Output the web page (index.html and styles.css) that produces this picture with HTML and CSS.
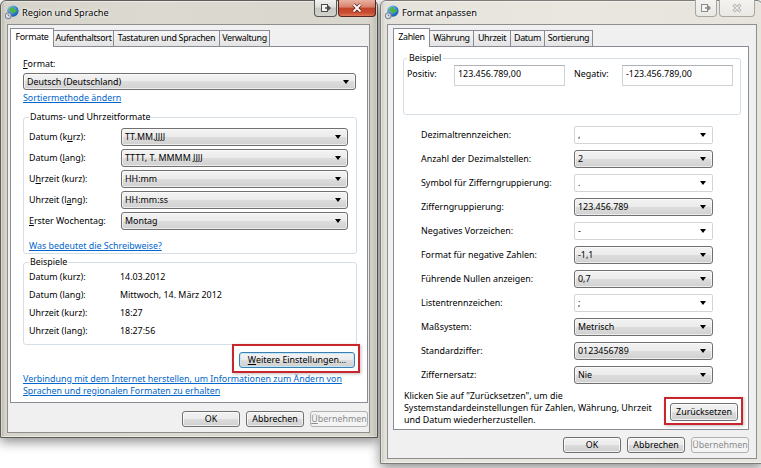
FILE: index.html
```html
<!DOCTYPE html>
<html lang="de">

<head>
    <meta charset="UTF-8">
    <meta name="viewport" content="width=device-width, initial-scale=1.0">
    <title>Region und Sprache</title>
    <link rel="stylesheet" href="styles.css">
</head>

<body>
    <div class="desk">

        <!-- Region und Sprache -->
        <section class="win win-main">
            <header class="titlebar">
                <svg class="appicon" viewBox="0 0 16 16">
                    <defs>
                        <radialGradient id="sea1" cx="0.35" cy="0.3" r="0.8">
                            <stop offset="0" stop-color="#9fd3ff"/>
                            <stop offset="0.6" stop-color="#2f7fd6"/>
                            <stop offset="1" stop-color="#134f9c"/>
                        </radialGradient>
                    </defs>
                    <circle cx="9.5" cy="6.5" r="6" fill="url(#sea1)"/>
                    <path d="M6 3.5c1.5-1.3 3.5-1.6 4.6-.8.6.5-.4 1.3.4 1.9.9.6 2.2.1 2.6 1.2.3.9-.7 1.6-1.6 1.7-1 .1-1.2 1.2-2 1.5-.9.3-1.2-.9-1.9-1.4C7.3 7 5.6 7 5.6 5.8c0-.9.1-1.6.4-2.3z" fill="#4fb443"/>
                    <circle cx="4.5" cy="11.5" r="3.6" fill="#7d8794"/>
                    <circle cx="4.5" cy="11.5" r="2.4" fill="#e9edf2"/>
                    <path d="M4.5 10v1.6h1.3" stroke="#445" stroke-width="0.8" fill="none"/>
                </svg>
                <span class="title">Region und Sprache</span>
                <div class="caption caption-main">
                    <span class="cbtn cbtn-tool">
                        <svg viewBox="0 0 12 10" width="12" height="10">
                            <rect x="1.5" y="1.5" width="6" height="7" fill="#f4f4f2" stroke="#4b4d50"/>
                            <path d="M5 5h4.5M8 3l2 2-2 2" stroke="#4b4d50" stroke-width="1.4" fill="none"/>
                        </svg>
                    </span>
                    <span class="cbtn cbtn-close">
                        <svg viewBox="0 0 12 10" width="12" height="10">
                            <path d="M2.5 1.5l7 7M9.5 1.5l-7 7" stroke="#5a1d12" stroke-width="3.2"/>
                            <path d="M2.5 1.5l7 7M9.5 1.5l-7 7" stroke="#fff" stroke-width="1.8"/>
                        </svg>
                    </span>
                </div>
            </header>
            <div class="frame-body">
                <div class="client">
                    <div class="tabs">
                        <span class="tab active tw-formate">Formate</span>
                        <span class="tab tw-ort">Aufenthaltsort</span>
                        <span class="tab tw-tast">Tastaturen und Sprachen</span>
                        <span class="tab tw-verw">Verwaltung</span>
                    </div>
                    <div class="pane pane-main">
                        <div class="lbl lbl-format"><u>F</u>ormat:</div>
                        <div class="combo combo-lang"><span class="val">Deutsch (Deutschland)</span></div>
                        <a class="link link-sort" href="#">Sortiermethode ändern</a>

                        <fieldset class="group group-formats">
                            <legend>Datums- und Uhrzeitformate</legend>
                            <div class="form-rows">
                                <div class="frow">
                                    <span class="flabel">Datum (k<u>u</u>rz):</span>
                                    <div class="combo combo-fmt"><span class="val">TT.MM.JJJJ</span></div>
                                </div>
                                <div class="frow">
                                    <span class="flabel">Datum (<u>l</u>ang):</span>
                                    <div class="combo combo-fmt"><span class="val">TTTT, T. MMMM JJJJ</span></div>
                                </div>
                                <div class="frow">
                                    <span class="flabel">U<u>h</u>rzeit (kurz):</span>
                                    <div class="combo combo-fmt"><span class="val">HH:mm</span></div>
                                </div>
                                <div class="frow">
                                    <span class="flabel">Uhrzeit (l<u>a</u>ng):</span>
                                    <div class="combo combo-fmt"><span class="val">HH:mm:ss</span></div>
                                </div>
                                <div class="frow">
                                    <span class="flabel"><u>E</u>rster Wochentag:</span>
                                    <div class="combo combo-fmt"><span class="val">Montag</span></div>
                                </div>
                            </div>
                            <a class="link link-notation" href="#">Was bedeutet die Schreibweise?</a>
                        </fieldset>

                        <fieldset class="group group-examples">
                            <legend>Beispiele</legend>
                            <div class="ex-rows">
                                <div class="erow"><span class="elabel">Datum (kurz):</span><span>14.03.2012</span></div>
                                <div class="erow"><span class="elabel">Datum (lang):</span><span>Mittwoch, 14. März 2012</span></div>
                                <div class="erow"><span class="elabel">Uhrzeit (kurz):</span><span>18:27</span></div>
                                <div class="erow"><span class="elabel">Uhrzeit (lang):</span><span>18:27:56</span></div>
                            </div>
                        </fieldset>

                        <div class="mark mark-more">
                            <span class="btn btn-default btn-more"><u>W</u>eitere Einstellungen...</span>
                        </div>
                        <a class="link link-online" href="#">Verbindung mit dem Internet herstellen, um Informationen zum Ändern von<br>Sprachen und regionalen Formaten zu erhalten</a>
                    </div>
                    <div class="dlg-buttons buttons-main">
                        <span class="btn">OK</span>
                        <span class="btn">Abbrechen</span>
                        <span class="btn disabled"><u>Ü</u>bernehmen</span>
                    </div>
                </div>
            </div>
        </section>

        <!-- Format anpassen -->
        <section class="win win-custom inactive">
            <header class="titlebar">
                <svg class="appicon" viewBox="0 0 16 16">
                    <defs>
                        <radialGradient id="sea2" cx="0.35" cy="0.3" r="0.8">
                            <stop offset="0" stop-color="#9fd3ff"/>
                            <stop offset="0.6" stop-color="#2f7fd6"/>
                            <stop offset="1" stop-color="#134f9c"/>
                        </radialGradient>
                    </defs>
                    <circle cx="9.5" cy="6.5" r="6" fill="url(#sea2)"/>
                    <path d="M6 3.5c1.5-1.3 3.5-1.6 4.6-.8.6.5-.4 1.3.4 1.9.9.6 2.2.1 2.6 1.2.3.9-.7 1.6-1.6 1.7-1 .1-1.2 1.2-2 1.5-.9.3-1.2-.9-1.9-1.4C7.3 7 5.6 7 5.6 5.8c0-.9.1-1.6.4-2.3z" fill="#4fb443"/>
                    <circle cx="4.5" cy="11.5" r="3.6" fill="#7d8794"/>
                    <circle cx="4.5" cy="11.5" r="2.4" fill="#e9edf2"/>
                    <path d="M4.5 10v1.6h1.3" stroke="#445" stroke-width="0.8" fill="none"/>
                </svg>
                <span class="title">Format anpassen</span>
                <div class="caption caption-custom">
                    <span class="cbtn cbtn-tool">
                        <svg viewBox="0 0 12 10" width="12" height="10">
                            <rect x="1.5" y="1.5" width="6" height="7" fill="#f4f4f2" stroke="#8a8c8e"/>
                            <path d="M5 5h4.5M8 3l2 2-2 2" stroke="#8a8c8e" stroke-width="1.4" fill="none"/>
                        </svg>
                    </span>
                    <span class="cbtn cbtn-close">
                        <svg viewBox="0 0 12 10" width="12" height="10">
                            <path d="M2.5 1.5l7 7M9.5 1.5l-7 7" stroke="#9a9c9e" stroke-width="3"/>
                            <path d="M2.5 1.5l7 7M9.5 1.5l-7 7" stroke="#f2f2f2" stroke-width="1.4"/>
                        </svg>
                    </span>
                </div>
            </header>
            <div class="frame-body">
                <div class="client">
                    <div class="tabs tabs-custom">
                        <span class="tab active tw-zahlen">Zahlen</span>
                        <span class="tab tw-waehr">Währung</span>
                        <span class="tab tw-uhr">Uhrzeit</span>
                        <span class="tab tw-datum">Datum</span>
                        <span class="tab tw-sort">Sortierung</span>
                    </div>
                    <div class="pane pane-custom">
                        <fieldset class="group group-sample">
                            <legend>Beispiel</legend>
                            <div class="sample-row">
                                <span class="slabel">Positiv:</span>
                                <span class="tb">123.456.789,00</span>
                                <span class="slabel slabel-neg">Negativ:</span>
                                <span class="tb">-123.456.789,00</span>
                            </div>
                        </fieldset>

                        <div class="num-rows">
                            <div class="nrow"><span class="nlabel">Dezimaltrennzeichen:</span><div class="combo combo-num edit"><span class="val">,</span></div></div>
                            <div class="nrow"><span class="nlabel">Anzahl der Dezimalstellen:</span><div class="combo combo-num"><span class="val">2</span></div></div>
                            <div class="nrow"><span class="nlabel">Symbol für Zifferngruppierung:</span><div class="combo combo-num edit"><span class="val">.</span></div></div>
                            <div class="nrow"><span class="nlabel">Zifferngruppierung:</span><div class="combo combo-num"><span class="val">123.456.789</span></div></div>
                            <div class="nrow"><span class="nlabel">Negatives Vorzeichen:</span><div class="combo combo-num edit"><span class="val">-</span></div></div>
                            <div class="nrow"><span class="nlabel">Format für negative Zahlen:</span><div class="combo combo-num"><span class="val">-1,1</span></div></div>
                            <div class="nrow"><span class="nlabel">Führende Nullen anzeigen:</span><div class="combo combo-num"><span class="val">0,7</span></div></div>
                            <div class="nrow"><span class="nlabel">Listentrennzeichen:</span><div class="combo combo-num edit"><span class="val">;</span></div></div>
                            <div class="nrow"><span class="nlabel">Maßsystem:</span><div class="combo combo-num"><span class="val">Metrisch</span></div></div>
                            <div class="nrow"><span class="nlabel">Standardziffer:</span><div class="combo combo-num"><span class="val">0123456789</span></div></div>
                            <div class="nrow"><span class="nlabel">Ziffernersatz:</span><div class="combo combo-num"><span class="val">Nie</span></div></div>
                        </div>

                        <div class="reset-row">
                            <p class="reset-text">Klicken Sie auf "Zurücksetzen", um die<br>Systemstandardeinstellungen für Zahlen, Währung, Uhrzeit<br>und Datum wiederherzustellen.</p>
                            <div class="mark mark-reset">
                                <span class="btn btn-reset">Zurücksetzen</span>
                            </div>
                        </div>
                    </div>
                    <div class="dlg-buttons buttons-custom">
                        <span class="btn">OK</span>
                        <span class="btn">Abbrechen</span>
                        <span class="btn disabled">Übernehmen</span>
                    </div>
                </div>
            </div>
        </section>

    </div>
</body>

</html>
```

FILE: styles.css
```css
* {
    box-sizing: border-box;
}

body {
    margin: 0;
    width: 761px;
    height: 468px;
    overflow: hidden;
    background: #fff;
    font-family: "Noto Sans", "DejaVu Sans", sans-serif;
    font-size: 8.9px;
    line-height: 12px;
    color: #000;
}

.desk {
    position: relative;
    width: 761px;
    height: 468px;
    overflow: hidden;
}

/* window frames */
.win {
    position: absolute;
    top: 0;
    display: flex;
    flex-direction: column;
    border: 1px solid #5d5e5a;
    border-radius: 6px 6px 0 0;
    background: linear-gradient(90deg, #b4b2aa 0, #d6d4ca 4px, #dcdad0 40%, #d9d7cd 100%);
    box-shadow: inset 0 0 0 1px rgba(255, 255, 255, .45), 0 4px 12px rgba(0, 0, 0, .45);
}

.win-main {
    left: 0;
    width: 378px;
    height: 438px;
}

.win-custom {
    left: 380px;
    width: 383px;
    height: 464px;
    border-color: #7c7d79;
    background: linear-gradient(90deg, #c9c7bf 0, #e4e2da 4px, #e9e7df 50%, #e6e4dc 100%);
}

.titlebar {
    flex: none;
    height: 23px;
    display: flex;
    align-items: center;
    padding-left: 3px;
}

.appicon {
    width: 15px;
    height: 15px;
    margin-right: 3px;
}

.title {
    font-size: 9.2px;
    text-shadow: 0 0 4px #fff, 0 0 2px #fff;
}

.caption {
    margin-left: auto;
    align-self: flex-start;
    display: flex;
    margin-top: -1px;
}

.caption-main {
    gap: 1px;
    margin-right: 1px;
}

.caption-custom {
    gap: 2px;
    margin-right: 7px;
}

.cbtn {
    height: 17px;
    display: flex;
    align-items: center;
    justify-content: center;
    border: 1px solid #55575a;
    border-top: none;
    border-radius: 0 0 4px 4px;
}

.caption-main .cbtn-tool {
    width: 23px;
    background: linear-gradient(#f1f1ef, #dededa 45%, #c8c8c3 50%, #d4d4cf);
}

.caption-main .cbtn-close {
    width: 38px;
    border-color: #5a261c;
    background: linear-gradient(#e9b1a3, #d8806b 45%, #c2442b 50%, #c94d31 80%, #de7a5b);
}

.caption-custom .cbtn {
    border-color: #a6a7a5;
    background: linear-gradient(#f4f3ef, #e9e8e3);
}

.caption-custom .cbtn-tool {
    width: 22px;
}

.caption-custom .cbtn-close {
    width: 36px;
}

.frame-body {
    flex: 1;
    display: flex;
    padding: 0 7px 4px 6px;
}

.win-custom .frame-body {
    padding: 0 5px 4px 6px;
}

.client {
    flex: 1;
    display: flex;
    flex-direction: column;
    border: 1px solid #8e8f8c;
    background: #f0f0f0;
}

/* tabs */
.tabs {
    position: relative;
    z-index: 1;
    display: flex;
    align-items: flex-end;
    height: 18px;
    margin: 3px 0 0 2px;
}

.tabs-custom {
    margin-left: 5px;
}

.tab {
    height: 16px;
    margin-right: -1px;
    border: 1px solid #898c95;
    border-bottom: none;
    background: linear-gradient(#f7f7f7, #e3e3e3);
    text-align: center;
    line-height: 14px;
    letter-spacing: -0.3px;
    white-space: nowrap;
}

.tab.active {
    position: relative;
    z-index: 2;
    height: 19px;
    margin-bottom: -1px;
    background: #fff;
    line-height: 15px;
}

.tw-formate { width: 44px; }
.tw-ort { width: 61px; }
.tw-tast { width: 107px; }
.tw-verw { width: 51px; }

.tw-zahlen { width: 37px; }
.tw-waehr { width: 45px; }
.tw-uhr { width: 38px; }
.tw-datum { width: 35px; }
.tw-sort { width: 49px; }

.pane {
    display: flex;
    flex-direction: column;
    border: 1px solid #898c95;
    background: #fff;
}

.pane-main {
    width: 358px;
    height: 357px;
    margin-left: 2px;
    padding-left: 12px;
}

.pane-custom {
    width: 356px;
    height: 384px;
    margin-left: 5px;
}

/* controls */
u {
    text-decoration-thickness: 1px;
    text-underline-offset: 1px;
}

.link {
    align-self: flex-start;
    color: #0066cc;
    text-decoration: underline;
    white-space: nowrap;
}

.combo {
    display: flex;
    align-items: center;
    height: 18px;
    padding-left: 3px;
    border: 1px solid #707070;
    border-radius: 3px;
    background: linear-gradient(#f3f3f3, #ebebeb 50%, #dddddd 50%, #d0d0d0);
    box-shadow: inset 0 0 0 1px rgba(255, 255, 255, .6);
    white-space: nowrap;
}

.combo .val {
    flex: 1;
}

.combo::after {
    content: "";
    margin-right: 6px;
    border-left: 3.5px solid transparent;
    border-right: 3.5px solid transparent;
    border-top: 4px solid #000;
}

.combo.edit {
    border-color: #d4d4d4;
    border-radius: 2px;
    background: #fff;
    box-shadow: none;
}

.btn {
    display: flex;
    align-items: center;
    justify-content: center;
    width: 58px;
    height: 16px;
    border: 1px solid #707070;
    border-radius: 3px;
    background: linear-gradient(#f2f2f2, #ebebeb 50%, #dddddd 50%, #cfcfcf);
    box-shadow: inset 0 0 0 1px rgba(255, 255, 255, .7);
    white-space: nowrap;
}

.btn.disabled {
    border-color: #adb2b5;
    background: #f4f4f4;
    color: #8b8b8b;
    box-shadow: none;
}

.btn-default {
    border-color: #3c7fb1;
    box-shadow: inset 0 0 0 1px #c4e5f6;
}

.btn-more {
    width: 116px;
}

.btn-reset {
    width: 68px;
    height: 18px;
}

.mark {
    align-self: flex-end;
    border: 2px solid #c8262c;
    box-shadow: 1px 1px 3px rgba(0, 0, 0, .25);
}

.mark-more {
    margin: -1px 7px 0 0;
    padding: 6px 3px 3px 5px;
}

.mark-reset {
    align-self: flex-start;
    margin: 7px 5px 0 auto;
    padding: 4px 3px 2px 4px;
}

.dlg-buttons {
    display: flex;
    justify-content: flex-end;
    gap: 6px;
}

.buttons-main {
    margin: 8px 1px 0 0;
}

.buttons-custom {
    margin: 7px 7px 0 0;
}

/* group boxes */
.group {
    margin: 0;
    min-width: 0;
    border: 1px solid #d5dfe5;
    border-radius: 3px;
}

.group legend {
    padding: 0 1px;
    line-height: 12px;
}

/* Region und Sprache */
.lbl-format {
    margin-top: 11px;
}

.combo-lang {
    width: 333px;
    height: 17px;
    margin-top: 3px;
}

.link-sort {
    margin-top: 2px;
}

.group-formats {
    width: 334px;
    margin-top: 7px;
    padding: 0 0 1px 5px;
    display: flex;
    flex-direction: column;
}

.form-rows {
    display: flex;
    flex-direction: column;
    gap: 3px;
    margin-top: 5px;
}

.frow {
    display: flex;
    align-items: center;
}

.flabel {
    width: 92px;
    white-space: nowrap;
}

.combo-fmt {
    width: 227px;
}

.link-notation {
    margin-top: 10px;
}

.group-examples {
    width: 334px;
    margin-top: 2px;
    padding: 0 0 7px 5px;
}

.ex-rows {
    display: flex;
    flex-direction: column;
    gap: 6px;
    margin-top: 3px;
}

.erow {
    display: flex;
    white-space: nowrap;
}

.elabel {
    width: 91px;
}

/* Format anpassen */
.group-sample {
    width: 338px;
    margin: 5px 0 0 9px;
    padding: 0 0 28px 3px;
}

.group-sample legend {
    padding: 0 2px;
}

.sample-row {
    display: flex;
    align-items: flex-start;
    margin-top: 1px;
}

.slabel {
    width: 47px;
    padding-top: 3px;
}

.slabel-neg {
    width: 48px;
    margin-left: 9px;
}

.tb {
    width: 111px;
    height: 21px;
    padding: 2px 3px;
    border: 1px solid #cfd2d6;
    border-top-color: #aeb1b6;
    background: #fff;
    white-space: nowrap;
}

.num-rows {
    display: flex;
    flex-direction: column;
    gap: 6px;
    margin: 11px 0 0 27px;
}

.nrow {
    display: flex;
    align-items: center;
}

.nlabel {
    width: 153px;
    white-space: nowrap;
}

.combo-num {
    width: 139px;
}

.reset-row {
    display: flex;
    margin-top: 6px;
}

.reset-text {
    margin: 0 0 0 10px;
    line-height: 12px;
    white-space: nowrap;
}
```
